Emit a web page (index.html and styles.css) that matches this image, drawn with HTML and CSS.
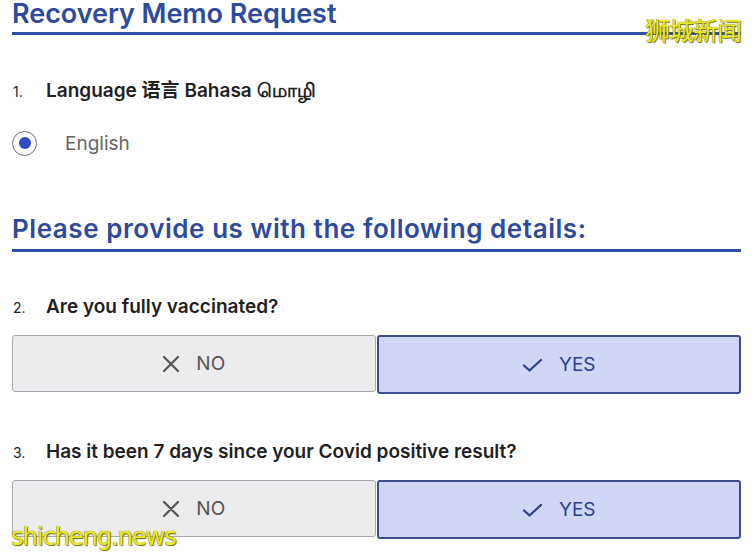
FILE: index.html
```html
<!DOCTYPE html>
<html lang="en">
<head>
<meta charset="utf-8">
<title>Recovery Memo Request</title>
<link rel="stylesheet" href="styles.css">
</head>
<body>
<div class="page">
  <h1 class="title">Recovery Memo Request</h1>

  <div class="question q1">
    <span class="num">1.</span>
    <span class="qtext">Language 语言 Bahasa மொழி</span>
  </div>
  <label class="radio-row">
    <span class="radio"><span class="dot"></span></span>
    <span class="radio-label">English</span>
  </label>

  <h2 class="section">Please provide us with the following details:</h2>

  <div class="question q2">
    <span class="num">2.</span>
    <span class="qtext">Are you fully vaccinated?</span>
  </div>
  <div class="choices">
    <div class="choice no">
      <svg class="ico" width="18" height="18" viewBox="0 0 18 18"><path d="M2 2 L16 16 M16 2 L2 16" stroke="currentColor" stroke-width="2.2" fill="none" stroke-linecap="round"/></svg>
      <span>NO</span>
    </div>
    <div class="choice yes">
      <svg class="ico" width="21" height="16" viewBox="0 0 21 16"><path d="M2 8.5 L7.5 13.5 L19 3" stroke="currentColor" stroke-width="2.2" fill="none" stroke-linecap="round" stroke-linejoin="round"/></svg>
      <span>YES</span>
    </div>
  </div>

  <div class="question q3">
    <span class="num">3.</span>
    <span class="qtext">Has it been 7 days since your Covid positive result?</span>
  </div>
  <div class="choices">
    <div class="choice no">
      <svg class="ico" width="18" height="18" viewBox="0 0 18 18"><path d="M2 2 L16 16 M16 2 L2 16" stroke="currentColor" stroke-width="2.2" fill="none" stroke-linecap="round"/></svg>
      <span>NO</span>
    </div>
    <div class="choice yes">
      <svg class="ico" width="21" height="16" viewBox="0 0 21 16"><path d="M2 8.5 L7.5 13.5 L19 3" stroke="currentColor" stroke-width="2.2" fill="none" stroke-linecap="round" stroke-linejoin="round"/></svg>
      <span>YES</span>
    </div>
  </div>
</div>
<div class="wm wm-top">狮城新闻</div>
<div class="wm wm-bottom">shicheng.news</div>
</body>
</html>
```

FILE: styles.css
```css
html, body {
  margin: 0;
  padding: 0;
  background: #ffffff;
}
body {
  font-family: "Inter", "Noto Sans", "Noto Sans CJK SC", sans-serif;
  color: #222;
  position: relative;
  width: 754px;
  height: 557px;
  overflow: hidden;
}
.page {
  padding: 0 13px 0 12px;
}
.title {
  margin: 0;
  font-size: 27px;
  line-height: 27px;
  font-weight: 600;
  color: #2d4a9c;
  border-bottom: 3px solid #2f4ea6;
  padding-bottom: 5px;
  letter-spacing: -0.05px;
}
.question {
  display: flex;
  align-items: baseline;
}
.num {
  width: 33px;
  padding-left: 1px;
  font-size: 14px;
  color: #222;
}
.qtext {
  font-size: 19px;
  font-weight: 600;
  color: #1f1f1f;
}
.q1 { margin-top: 43px; line-height: 26px; }
.radio-row {
  display: flex;
  align-items: center;
  margin-top: 24px;
  height: 28px;
}
.radio {
  width: 25px;
  height: 25px;
  border: 1.5px solid #6b6b78;
  border-radius: 50%;
  display: flex;
  align-items: center;
  justify-content: center;
  box-sizing: border-box;
}
.dot {
  width: 12px;
  height: 12px;
  border-radius: 50%;
  background: #2f4bc4;
}
.radio-label {
  margin-left: 28px;
  font-size: 19px;
  color: #666;
}
.section {
  margin: 54px 0 0 0;
  font-size: 26px;
  line-height: 36px;
  font-weight: 600;
  color: #2d4a9c;
  border-bottom: 3px solid #2f4ea6;
  padding-bottom: 2px;
  letter-spacing: 0.55px;
}
.q2 { margin-top: 42px; line-height: 26px; }
.q3 { margin-top: 45px; line-height: 26px; }
.choices {
  display: grid;
  grid-template-columns: 1fr 1fr;
  margin-top: 14px;
  align-items: start;
}
.choice {
  display: flex;
  align-items: center;
  justify-content: center;
  gap: 16px;
  font-size: 19px;
  border-radius: 3px;
  box-sizing: border-box;
}
.choice.no {
  height: 57px;
  background: #ecebee;
  border: 1px solid #a9a9ad;
  color: #555;
  margin-right: 1px;
}
.choice.yes {
  height: 59px;
  background: #d1d6f6;
  border: 2px solid #3d4d8e;
  color: #2b3f8c;
}
.wm {
  position: absolute;
  color: #ecec1c;
  text-shadow: 1px 1px 1px #6b6b20, 0 0 1px #55551a;
  font-family: "Noto Sans CJK SC", "DejaVu Sans", sans-serif;
}
.wm-top {
  top: 11px;
  right: 13px;
  font-size: 25px;
  letter-spacing: -1px;
}
.wm-bottom {
  left: 11px;
  bottom: 6px;
  font-family: "DejaVu Sans", sans-serif;
  font-size: 24px;
  letter-spacing: -1px;
}
```
